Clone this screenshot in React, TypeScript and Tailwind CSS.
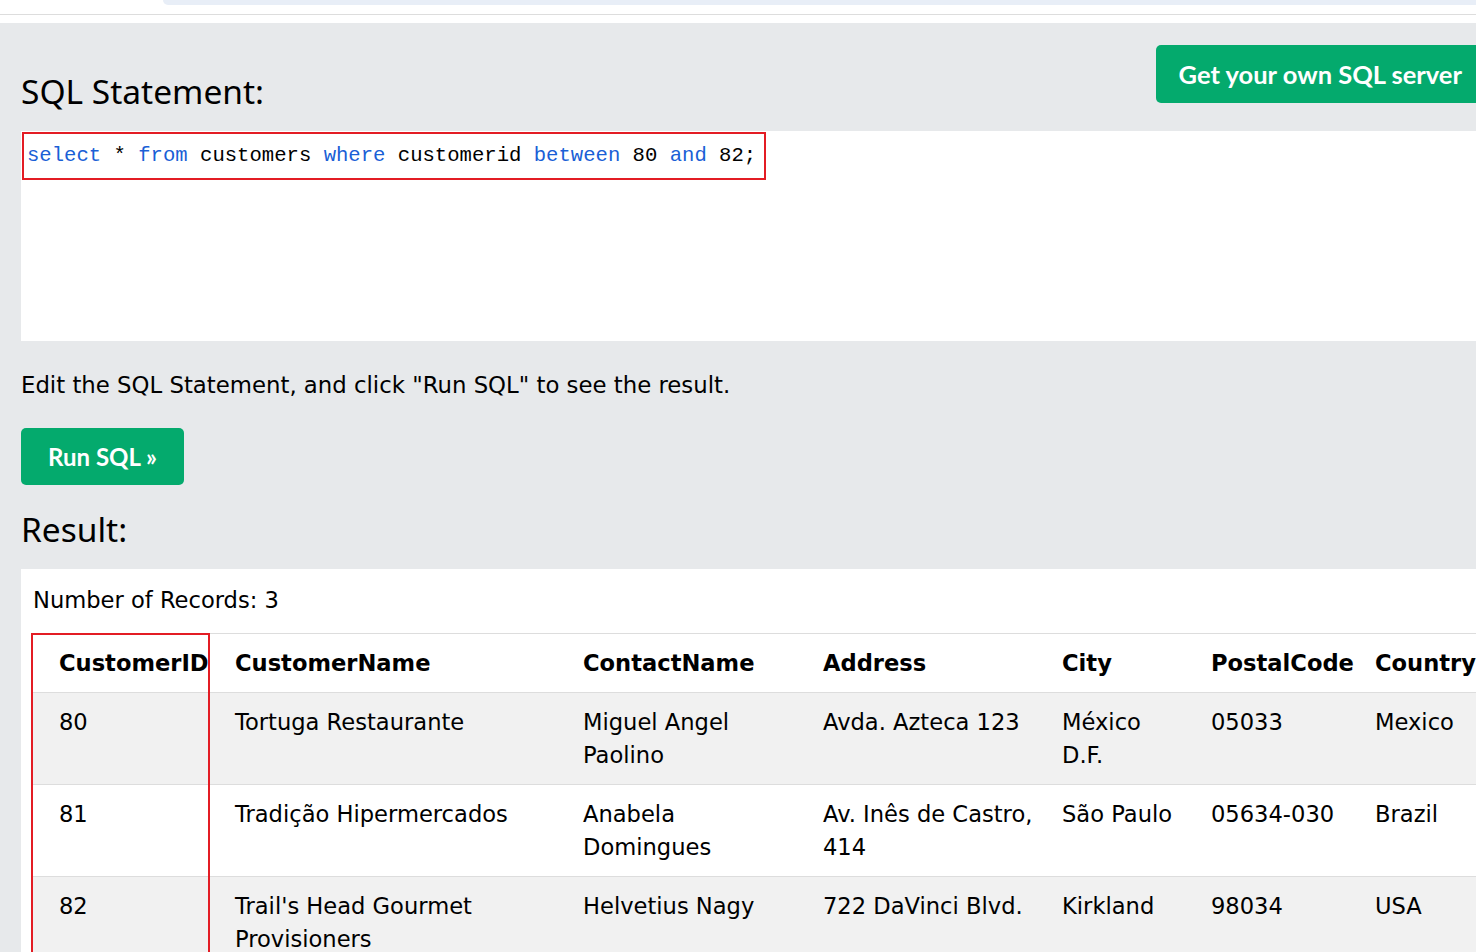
const rows = [
  {
    id: '80',
    name: 'Tortuga Restaurante',
    contact: 'Miguel Angel Paolino',
    address: 'Avda. Azteca 123',
    city: 'México D.F.',
    postal: '05033',
    country: 'Mexico',
  },
  {
    id: '81',
    name: 'Tradição Hipermercados',
    contact: 'Anabela Domingues',
    address: 'Av. Inês de Castro, 414',
    city: 'São Paulo',
    postal: '05634-030',
    country: 'Brazil',
  },
  {
    id: '82',
    name: "Trail's Head Gourmet Provisioners",
    contact: 'Helvetius Nagy',
    address: '722 DaVinci Blvd.',
    city: 'Kirkland',
    postal: '98034',
    country: 'USA',
  },
];

const cols = [
  { key: 'id', label: 'CustomerID', w: 'w-[176px]' },
  { key: 'name', label: 'CustomerName', w: 'w-[348px]' },
  { key: 'contact', label: 'ContactName', w: 'w-[240px]' },
  { key: 'address', label: 'Address', w: 'w-[239px]' },
  { key: 'city', label: 'City', w: 'w-[149px]' },
  { key: 'postal', label: 'PostalCode', w: 'w-[164px]' },
  { key: 'country', label: 'Country', w: 'w-[160px]' },
] as const;

const body = "font-['DejaVu_Sans',Verdana,sans-serif]";
const heading = "font-['Noto_Sans',sans-serif]";

export default function App() {
  return (
    <div className="h-[952px] w-[1476px] overflow-hidden bg-white">
      {/* Browser chrome strip */}
      <div className="h-[23px] bg-white">
        <div className="h-[15px] border-b border-[#dddddd]">
          <div className="ml-[163px] h-[5px] rounded-bl-[8px] bg-[#e8eef7]" />
        </div>
      </div>

      <div className="h-full bg-[#e7e9eb] pl-[21px]">
        <div className="flex items-start justify-between">
          <h2
            className={`${heading} pt-[45px] text-[33.5px] leading-[46px] font-normal text-black`}
          >
            SQL Statement:
          </h2>
          <button
            className="mt-[22px] flex h-[58px] items-center rounded-l-[5px] bg-[#04aa6d] pr-[14px] pl-[23px] font-['Lato',sans-serif] text-[25.5px] font-bold text-white"
          >
            Get your own SQL server
          </button>
        </div>

        {/* Editor */}
        <div className="mt-[17px] h-[210px] bg-white pt-px">
          <div className="ml-px inline-flex h-[48px] items-center border-2 border-[#e31c24] pr-[8px] pl-[3px] font-['Liberation_Mono',monospace] text-[20.6px] whitespace-pre text-black">
            <span className="text-[#1a5fd6]">select</span> *{' '}
            <span className="text-[#1a5fd6]">from</span> customers{' '}
            <span className="text-[#1a5fd6]">where</span> customerid{' '}
            <span className="text-[#1a5fd6]">between</span> 80{' '}
            <span className="text-[#1a5fd6]">and</span> 82;
          </div>
        </div>

        <p className={`${body} mt-[29px] text-[22.8px] leading-[30px] text-black`}>
          Edit the SQL Statement, and click "Run SQL" to see the result.
        </p>

        <button className="mt-[28px] flex h-[57px] w-[163px] items-center justify-center rounded-[5px] bg-[#04aa6d] font-['Lato',sans-serif] text-[24px] font-bold text-white">
          Run SQL »
        </button>

        <h2 className={`${heading} mt-[21px] text-[33.5px] leading-[46px] text-black`}>
          Result:
        </h2>

        {/* Result panel */}
        <div className="mt-[17px] bg-white pt-[16px] pl-[12px]">
          <div className={`${body} text-[22.6px] leading-[30px] text-black`}>
            Number of Records: 3
          </div>
          <div className="relative mt-[18px]">
            <table
              className={`${body} w-[1476px] table-fixed border-collapse text-left text-[22.6px] leading-[33px] text-black`}
            >
              <colgroup>
                {cols.map((c) => (
                  <col key={c.key} className={c.w} />
                ))}
              </colgroup>
              <thead>
                <tr className="border-t border-[#dddddd]">
                  {cols.map((c) => (
                    <th
                      key={c.key}
                      className="pt-[13px] pr-0 pb-[12px] pl-[26px] align-top font-bold whitespace-nowrap"
                    >
                      {c.label}
                    </th>
                  ))}
                </tr>
              </thead>
              <tbody>
                {rows.map((r, i) => (
                  <tr
                    key={r.id}
                    className={`border-t border-[#dddddd] ${i % 2 === 0 ? 'bg-[#f1f1f1]' : 'bg-white'}`}
                  >
                    {cols.map((c) => (
                      <td key={c.key} className="pt-[13px] pr-0 pb-[12px] pl-[26px] align-top">
                        {r[c.key]}
                      </td>
                    ))}
                  </tr>
                ))}
              </tbody>
            </table>
            {/* Highlight around the CustomerID column */}
            <div className="pointer-events-none absolute top-0 left-[-2px] h-[400px] w-[179px] border-2 border-[#e31c24]" />
          </div>
        </div>
      </div>
    </div>
  );
}
